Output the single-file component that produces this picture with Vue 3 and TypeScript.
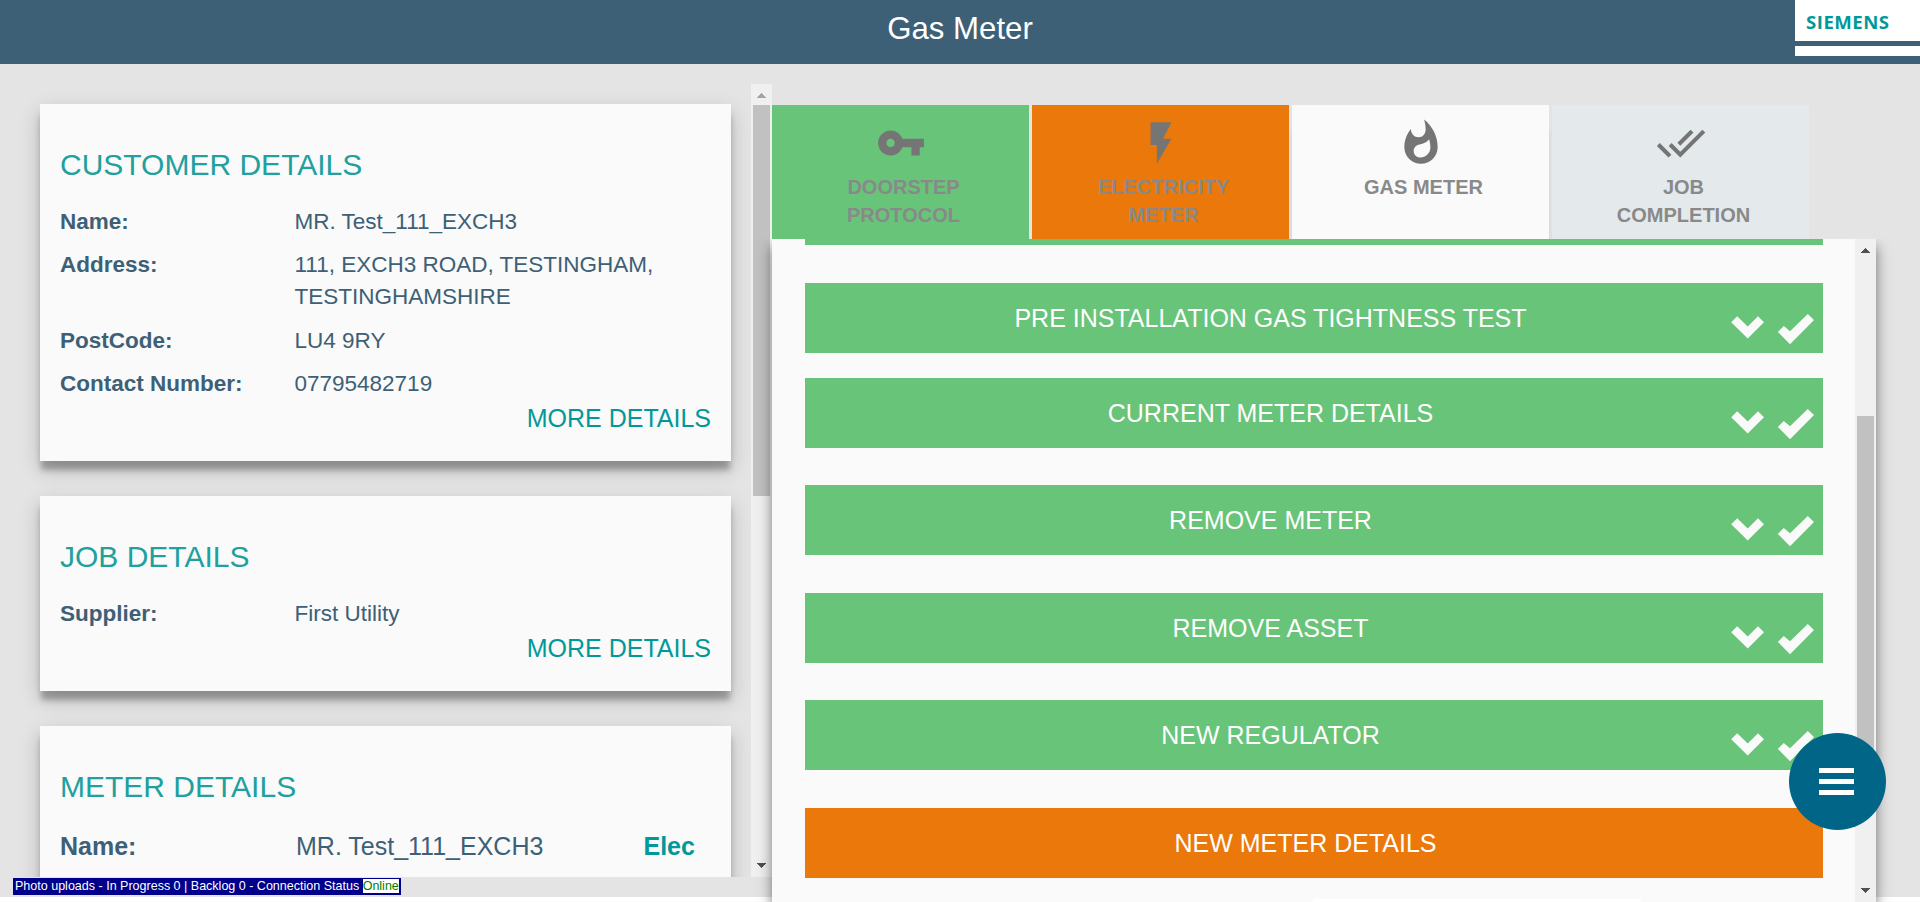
<script setup lang="ts">
interface Row { label: string; value: string }
interface Card { title: string; rows: Row[] }
interface Tab { lines: string[]; tone: string; icon: string }
interface Section { title: string; gap: number; pending?: boolean }

const cards: Card[] = [
  {
    title: 'CUSTOMER DETAILS',
    rows: [
      { label: 'Name:', value: 'MR. Test_111_EXCH3' },
      { label: 'Address:', value: '111, EXCH3 ROAD, TESTINGHAM, TESTINGHAMSHIRE' },
      { label: 'PostCode:', value: 'LU4 9RY' },
      { label: 'Contact Number:', value: '07795482719' },
    ],
  },
  { title: 'JOB DETAILS', rows: [{ label: 'Supplier:', value: 'First Utility' }] },
]

const tabs: Tab[] = [
  {
    lines: ['DOORSTEP', 'PROTOCOL'],
    tone: 'green',
    icon: 'M12.65 10C11.83 7.67 9.61 6 7 6c-3.31 0-6 2.69-6 6s2.69 6 6 6c2.61 0 4.83-1.67 5.65-4H17v4h4v-4h2v-4H12.65zM7 14c-1.1 0-2-.9-2-2s.9-2 2-2 2 .9 2 2-.9 2-2 2z',
  },
  { lines: ['ELECTRICITY', 'METER'], tone: 'orange', icon: 'M7 2v11h3v9l7-12h-4l4-8z' },
  {
    lines: ['GAS METER'],
    tone: 'light',
    icon: 'M13.5.67s.74 2.65.74 4.8c0 2.06-1.35 3.73-3.41 3.73-2.07 0-3.63-1.67-3.63-3.73l.03-.36C5.21 7.51 4 10.62 4 14c0 4.42 3.58 8 8 8s8-3.58 8-8C20 8.61 17.41 3.8 13.5.67zM11.71 19c-1.78 0-3.22-1.4-3.22-3.14 0-1.62 1.05-2.76 2.81-3.12 1.77-.36 3.6-1.21 4.62-2.58.39 1.29.59 2.65.59 4.04 0 2.65-2.15 4.8-4.8 4.8z',
  },
  {
    lines: ['JOB', 'COMPLETION'],
    tone: 'pale',
    icon: 'M18 7l-1.41-1.41-6.34 6.34 1.41 1.41L18 7zm4.24-1.41L11.66 16.17 7.48 12l-1.41 1.41L11.66 19l12-12-1.42-1.41zM.41 13.41L6 19l1.41-1.41L1.83 12 .41 13.41z',
  },
]

const sections: Section[] = [
  { title: 'PRE INSTALLATION GAS TIGHTNESS TEST', gap: 38 },
  { title: 'CURRENT METER DETAILS', gap: 25 },
  { title: 'REMOVE METER', gap: 37 },
  { title: 'REMOVE ASSET', gap: 38 },
  { title: 'NEW REGULATOR', gap: 37 },
  { title: 'NEW METER DETAILS', gap: 38, pending: true },
]
</script>

<template>
  <div class="page">
    <header class="header">
      <h1>Gas Meter</h1>
      <div class="logo"><span>SIEMENS</span><i></i></div>
    </header>

    <main class="body">
      <div class="left">
        <div class="cards">
          <section v-for="card in cards" :key="card.title" class="card">
            <h2>{{ card.title }}</h2>
            <div v-for="row in card.rows" :key="row.label" class="row">
              <b>{{ row.label }}</b><span>{{ row.value }}</span>
            </div>
            <a class="more">MORE DETAILS</a>
          </section>
          <section class="card">
            <h2>METER DETAILS</h2>
            <div class="row large">
              <b>Name:</b><span>MR. Test_111_EXCH3</span><strong>Elec</strong>
            </div>
          </section>
        </div>
        <div class="scroll scroll-left">
          <svg class="arrow faded" viewBox="0 0 9 5" shape-rendering="crispEdges"><path d="M0 5L4.5 0 9 5z" /></svg>
          <div class="thumb"></div>
          <svg class="arrow" viewBox="0 0 9 5" shape-rendering="crispEdges"><path d="M0 0L4.5 5 9 0z" /></svg>
        </div>
      </div>

      <div class="right">
        <nav class="tabs">
          <div v-for="tab in tabs" :key="tab.lines[0]" class="tab" :class="tab.tone">
            <svg viewBox="0 0 24 24"><path :d="tab.icon" /></svg>
            <span v-for="line in tab.lines" :key="line">{{ line }}</span>
          </div>
        </nav>
        <div class="panel">
          <div class="sections">
            <div class="sliver"></div>
            <div
              v-for="s in sections"
              :key="s.title"
              class="bar"
              :class="{ pending: s.pending }"
              :style="{ marginTop: s.gap + 'px' }"
            >
              <span>{{ s.title }}</span>
              <svg v-if="!s.pending" class="marks" viewBox="0 0 84 32">
                <path d="M0.2 8.2L6.2 2.2 16.7 12.4 27 2.2 33 8.2 16.7 24.4z" />
                <path d="M46.8 17.9L52.8 11.9 59 17.3 76.8 0 83 5.9 59 30.2z" />
              </svg>
            </div>
            <div class="next"></div>
          </div>
          <div class="scroll scroll-right">
            <svg class="arrow" viewBox="0 0 9 5" shape-rendering="crispEdges"><path d="M0 5L4.5 0 9 5z" /></svg>
            <div class="thumb"></div>
            <svg class="arrow" viewBox="0 0 9 5" shape-rendering="crispEdges"><path d="M0 0L4.5 5 9 0z" /></svg>
          </div>
        </div>
      </div>
    </main>

    <div class="status">Photo uploads - In Progress 0 | Backlog 0 - Connection Status <em>Online</em></div>
    <button class="fab"><i></i><i></i><i></i></button>
  </div>
</template>

<style>
body {
  margin: 0;
  overflow: hidden;
  background: #fff;
}
</style>

<style scoped>
.page {
  position: relative;
  width: 1920px;
  height: 902px;
  overflow: hidden;
  background: linear-gradient(#e4e4e4 897px, #fff 897px);
  font-family: "Liberation Sans", Arial, sans-serif;
  color: #3d6076;
}
.header {
  display: flex;
  justify-content: center;
  height: 64px;
  background: #3d6076;
}
h1 {
  margin: 0;
  font-size: 31.2px;
  font-weight: 400;
  line-height: 57px;
  color: #fff;
}
.logo {
  position: absolute;
  top: 0;
  right: 0;
  width: 125px;
  height: 56px;
  background: #fff;
}
.logo span {
  display: block;
  height: 41px;
  padding-left: 11px;
  font: 700 18.6px/44px "Open Sans", sans-serif;
  letter-spacing: 0.5px;
  color: #099;
}
.logo i {
  display: block;
  height: 5px;
  background: #3d6076;
}
.body {
  display: flex;
  height: 838px;
}
.left {
  display: flex;
  width: 772px;
  height: 793px;
  margin-top: 20px;
  overflow: hidden;
}
.cards {
  width: 691px;
  padding: 20px 20px 0 40px;
}
.card {
  box-sizing: border-box;
  height: 357px;
  margin-bottom: 35px;
  padding: 42px 20px 0;
  background: #fafafa;
  box-shadow: 0 10px 6px -1px rgba(0, 0, 0, 0.27), 0 8px 20px rgba(0, 0, 0, 0.2);
}
.card:nth-child(2) {
  height: 195px;
}
h2 {
  margin: 0 0 22px;
  font-size: 30px;
  font-weight: 400;
  line-height: 38px;
  color: #20a09e;
}
.row {
  display: flex;
  margin-bottom: 11.3px;
  font-size: 22.5px;
  line-height: 32px;
}
.row b {
  width: 234.5px;
  flex: none;
}
.row.large {
  margin-top: 24px;
  font-size: 25px;
}
.row.large b {
  width: 236px;
}
.row.large span {
  width: 347.5px;
}
.row strong {
  color: #099;
}
.more {
  display: block;
  margin-top: -9px;
  text-align: right;
  font-size: 25px;
  line-height: 32px;
  color: #099;
}
.scroll {
  display: flex;
  flex-direction: column;
  align-items: center;
  justify-content: space-between;
  box-sizing: border-box;
  width: 21px;
  flex: none;
  background: #f0f0f0;
}
.arrow {
  width: 9px;
  height: 5px;
  fill: #505050;
}
.arrow.faded {
  fill: #a3a3a3;
}
.thumb {
  width: 17px;
  background: #c1c1c1;
}
.scroll-left {
  padding: 9px 0;
}
.scroll-left .thumb {
  height: 391px;
  margin: 7px 0 auto;
}
.right {
  width: 1104px;
  padding-top: 41px;
}
.tabs {
  display: flex;
  gap: 3px;
  height: 134px;
}
.tab {
  display: flex;
  flex-direction: column;
  align-items: center;
  width: 257px;
  font-size: 20px;
  font-weight: 700;
  line-height: 28px;
  color: #898989;
}
.tab span {
  padding-left: 6px;
}
.tab svg {
  width: 50px;
  height: 50px;
  margin: 13px 0 5px;
  fill: #757575;
}
.green {
  background: #68c479;
}
.orange {
  background: #eb780a;
}
.light {
  background: #fafafa;
  box-shadow: 0 22px 8px -4px rgba(0, 0, 0, 0.25);
}
.pale {
  background: #e4eaec;
}
.panel {
  position: relative;
  display: flex;
  height: 663px;
  background: #fafafa;
  box-shadow: 0 8px 10px rgba(0, 0, 0, 0.35), 0 8px 18px rgba(0, 0, 0, 0.2);
  clip-path: inset(0 -40px 0 -40px);
}
.sections {
  width: 1018px;
  padding: 0 32px 0 33px;
}
.sliver {
  height: 6px;
  background: #68c479;
}
.bar {
  position: relative;
  box-sizing: border-box;
  height: 70px;
  padding-right: 87px;
  background: #68c479;
  text-align: center;
  font-size: 25px;
  line-height: 70px;
  color: #fff;
}
.bar.pending {
  padding-right: 17px;
  background: #eb780a;
}
.marks {
  position: absolute;
  right: 8px;
  top: 31px;
  width: 84px;
  height: 32px;
  fill: #fafafa;
}
.next {
  width: 328px;
  height: 3px;
  margin: 21px 0 0 508px;
  background: #fff;
}
.scroll-right {
  padding: 9px 0;
}
.scroll-right .thumb {
  height: 370px;
  margin: 163px 0 auto;
}
.status {
  position: absolute;
  left: 13px;
  top: 878px;
  padding: 1px 2px 2px;
  background: #00008b;
  font-size: 12.53px;
  line-height: 14px;
  white-space: nowrap;
  color: #fff;
}
.status em {
  display: inline-block;
  background: #fff;
  font-style: normal;
  color: #008000;
}
.fab {
  position: absolute;
  left: 1788.5px;
  top: 732.5px;
  box-sizing: border-box;
  display: flex;
  flex-direction: column;
  align-items: center;
  justify-content: center;
  gap: 6px;
  width: 97px;
  height: 97px;
  padding: 0 1px 0 0;
  border: 0;
  border-radius: 50%;
  background: #006587;
}
.fab i {
  width: 35px;
  height: 5px;
  background: #fff;
}
</style>
